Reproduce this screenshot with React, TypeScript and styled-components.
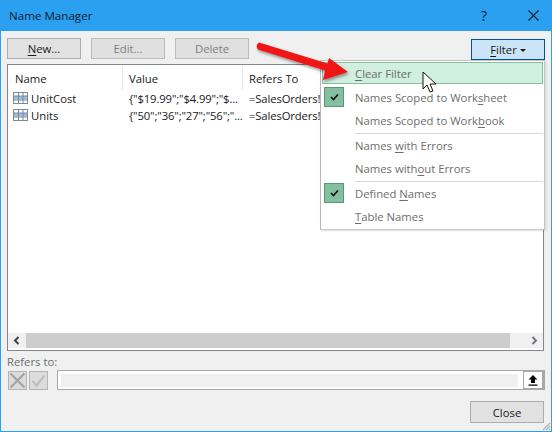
import React from "react";
import styled, { createGlobalStyle } from "styled-components";

const Global = createGlobalStyle`
  html, body { margin: 0; padding: 0; background: #f0f0f0; }
  body { font-family: "Open Sans", "Noto Sans", "Liberation Sans", sans-serif; font-size: 11.3px; color: #1a1a1a; }
  u { text-underline-offset: 2px; text-decoration-thickness: 1px; }
`;

const Win = styled.div`
  position: relative; width: 552px; height: 432px; box-sizing: border-box;
  display: flex; flex-direction: column; background: #f0f0f0;
  border: solid #2b9ff0; border-width: 0 1px 1px 1px; overflow: hidden;
`;
const TitleBar = styled.div`
  height: 31px; flex: none; background: #2b9ff0; display: flex; align-items: center;
  padding: 0 12px 0 8px; color: #10202c; font-size: 11.6px;
`;
const Title = styled.div` flex: 1; `;
const Help = styled.div` width: 12px; margin-right: 38px; font-size: 14px; text-align: center; `;
const Body = styled.div`
  flex: 1; display: flex; flex-direction: column; padding: 7px 6px 8px 6px; min-height: 0;
`;
const Toolbar = styled.div` display: flex; gap: 10px; height: 20px; margin-bottom: 6px; `;
const Btn = styled.div<{ $off?: boolean }>`
  width: 74px; height: 21px; box-sizing: border-box; display: flex; align-items: center; justify-content: center;
  background: ${p => (p.$off ? "#e0e0e0" : "#e1e1e1")};
  border: 1px solid ${p => (p.$off ? "#bcbcbc" : "#adadad")};
  color: ${p => (p.$off ? "#7e7e7e" : "#1a1a1a")};
`;
const FilterBtn = styled(Btn)`
  margin-left: auto; margin-top: 1px; background: #cce4f7; border-color: #005499; gap: 3px;
`;
const Caret = styled.span`
  border: solid transparent; border-width: 3px 3px 0 3px; border-top-color: #1a1a1a; margin-top: 1px;
`;
const List = styled.div`
  height: 287px; flex: none; background: #fff; border: 1px solid #828790; display: flex; flex-direction: column;
  width: 537px; box-sizing: border-box;
`;
const Head = styled.div`
  display: grid; grid-template-columns: 115px 120px 1fr; height: 24px; margin-top: 1px; flex: none;
`;
const HeadCell = styled.div`
  display: flex; align-items: center; padding-left: 6px; border-right: 1px solid #e5e5e5; color: #1a1a1a;
  &:first-child { padding-left: 7px; }
`;
const Rows = styled.div` flex: 1; min-height: 0; padding-top: 0; `;
const Row = styled.div`
  display: grid; grid-template-columns: 115px 120px 1fr; height: 17px; align-items: center; white-space: nowrap;
`;
const NameCell = styled.div` display: flex; align-items: center; gap: 2px; padding-left: 5px; `;
const Cell = styled.div` padding-left: 6px; overflow: hidden; letter-spacing: -0.14px; `;
const Scroll = styled.div`
  height: 15px; margin: 0 0 2px 0; background: #f0f0f0; display: flex; align-items: center; flex: none;
`;
const ScrollEnd = styled.div<{ $w: number }>`
  width: ${p => p.$w}px; flex: none; display: flex; align-items: center; justify-content: center;
`;
const Thumb = styled.div` flex: 1; height: 100%; background: #cdcdcd; `;
const RefLabel = styled.div` margin-top: 3px; height: 15px; line-height: 15px; color: #6d6d6d; `;
const RefRow = styled.div` display: flex; height: 20px; margin-top: 1px; width: 538px; align-items: center; `;
const IconBtn = styled.div`
  width: 19px; height: 19px; box-sizing: border-box; border: 1px solid #b4b4b4; background: #dcdcdc;
  margin-left: 1px; margin-right: 1px; display: flex; align-items: center; justify-content: center;
`;
const RefField = styled.div`
  flex: 1; height: 20px; margin-left: 8px; box-sizing: border-box; border: solid #a8a8a8; border-width: 1px 0 1px 1px;
  background: #fff; padding: 3px 5px 2px 3px; display: flex;
`;
const RefInner = styled.div` flex: 1; background: #f0f0f0; `;
const Upload = styled.div`
  width: 22px; height: 20px; box-sizing: border-box; border: 2px solid #a8a8a8; border-left-width: 1px; border-right-width: 3px;
  background: #fff; display: flex; align-items: center; justify-content: center;
`;
const Footer = styled.div` margin-top: auto; display: flex; justify-content: flex-end; width: 537px; `;
const CloseBtn = styled(Btn)` height: 22px; border-color: #adadad; `;
const Menu = styled.div`
  position: absolute; left: 319px; top: 60px; width: 225px; height: 170px; box-sizing: border-box;
  background: #fff; border: 1px solid #c6c6c6; border-left-color: #b8b8b8; padding: 1px; display: flex; flex-direction: column;
  box-shadow: 1px 1px 2px rgba(0,0,0,.12);
`;
const MenuItem = styled.div<{ $hi?: boolean }>`
  height: ${p => (p.$hi ? 22 : 23)}px; flex: none; box-sizing: border-box; display: flex; align-items: center; position: relative;
  padding-left: 33px; color: #6d6d6d; white-space: nowrap;
  ${p => p.$hi && "background: #d1efdf; border: 1px solid #86bfa0; padding-left: 32px; margin-bottom: 2px;"}
`;
const Sep = styled.div` height: 1px; background: #d7d7d7; margin: 1px 0 0 33px; flex: none; `;
const Check = styled.div`
  position: absolute; left: 2px; top: 1px; width: 20px; height: 20px; box-sizing: border-box;
  background: #86bfa0; border: 1px solid #4f9d74; display: flex; align-items: center; justify-content: center;
`;
const Overlay = styled.svg` position: absolute; left: 0; top: 0; pointer-events: none; `;

const TableIcon = () => (
  <svg width="16" height="13" viewBox="0 0 16 13">
    <rect x=".5" y=".5" width="14" height="11" fill="#fff" stroke="#7a8a99" />
    <rect x="1" y="4" width="13" height="3.5" fill="#9dbde0" />
    <path d="M.5 4h14M.5 8h14M5.5 .5v11M10 .5v11" stroke="#7a8a99" strokeWidth="1" fill="none" />
  </svg>
);
const Tick = () => (
  <svg width="9" height="8" viewBox="0 0 9 8"><path d="M1 4l2.5 2.5L8 1.5" stroke="#111" strokeWidth="1.7" fill="none" /></svg>
);

export default function App() {
  return (
    <Win>
      <Global />
      <TitleBar>
        <Title>Name Manager</Title>
        <Help>?</Help>
        <svg width="11" height="11" viewBox="0 0 11 11"><path d="M.5 .5l10 10M10.5 .5l-10 10" stroke="#10202c" strokeWidth="1.1" /></svg>
      </TitleBar>
      <Body>
        <Toolbar>
          <Btn><span><u>N</u>ew...</span></Btn>
          <Btn $off>Edit...</Btn>
          <Btn $off>Delete</Btn>
          <FilterBtn><span><u>F</u>ilter</span><Caret /></FilterBtn>
        </Toolbar>
        <List>
          <Head>
            <HeadCell>Name</HeadCell>
            <HeadCell>Value</HeadCell>
            <HeadCell>Refers To</HeadCell>
          </Head>
          <Rows>
            <Row>
              <NameCell><TableIcon />UnitCost</NameCell>
              <Cell>{'{"$19.99";"$4.99";"$...'}</Cell>
              <Cell>=SalesOrders!$</Cell>
            </Row>
            <Row>
              <NameCell><TableIcon />Units</NameCell>
              <Cell>{'{"50";"36";"27";"56";"...'}</Cell>
              <Cell>=SalesOrders!$</Cell>
            </Row>
          </Rows>
          <Scroll>
            <ScrollEnd $w={18}>
              <svg width="8" height="9" viewBox="0 0 8 9"><path d="M5.5 1L2 4.5 5.5 8" stroke="#444" strokeWidth="2" fill="none" /></svg>
            </ScrollEnd>
            <Thumb />
            <ScrollEnd $w={33}>
              <svg width="8" height="9" viewBox="0 0 8 9" style={{ marginLeft: 14 }}><path d="M2.5 1L6 4.5 2.5 8" stroke="#777" strokeWidth="2" fill="none" /></svg>
            </ScrollEnd>
          </Scroll>
        </List>
        <RefLabel>Refers to:</RefLabel>
        <RefRow>
          <IconBtn>
            <svg width="17" height="17" viewBox="0 0 17 17"><path d="M1.5 1.5l14 14M15.5 1.5l-14 14" stroke="#a6a6a6" strokeWidth="2.4" /></svg>
          </IconBtn>
          <IconBtn>
            <svg width="15" height="13" viewBox="0 0 15 13"><path d="M1.5 7l4 4.5L13.5 1.5" stroke="#c0c0c0" strokeWidth="2.4" fill="none" /></svg>
          </IconBtn>
          <RefField><RefInner /></RefField>
          <Upload>
            <svg width="10" height="11" viewBox="0 0 10 11"><path d="M5 0L9.5 4.5H7V8H3V4.5H.5zM.5 9.5h9v1.2h-9z" fill="#000" /></svg>
          </Upload>
        </RefRow>
        <Footer><CloseBtn>Close</CloseBtn></Footer>
      </Body>
      <Menu>
        <MenuItem $hi><span><u>C</u>lear Filter</span></MenuItem>
        <MenuItem><Check><Tick /></Check><span>Names Scoped to Work<u>s</u>heet</span></MenuItem>
        <MenuItem><span>Names Scoped to Work<u>b</u>ook</span></MenuItem>
        <Sep />
        <MenuItem><span>Names <u>w</u>ith Errors</span></MenuItem>
        <MenuItem><span>Names with<u>o</u>ut Errors</span></MenuItem>
        <Sep />
        <MenuItem><Check><Tick /></Check><span>Defined <u>N</u>ames</span></MenuItem>
        <MenuItem><span><u>T</u>able Names</span></MenuItem>
      </Menu>
      <Overlay width="552" height="432" viewBox="1 0 552 432">
        <defs>
          <filter id="sh" x="-10%" y="-20%" width="130%" height="150%">
            <feDropShadow dx="1" dy="2" stdDeviation="1.5" floodColor="#000" floodOpacity=".4" />
          </filter>
        </defs>
        <path filter="url(#sh)" d="M259 42.5 Q255 45 258 49.5 L325 70.5 L323 80 L348 72 L329 58 L327.5 63.5 Z" fill="#f01414" />
        <path d="M423 72v17l4-4 3 7 3-1-3-7h6z" fill="#fff" stroke="#111" strokeWidth="1" />
      </Overlay>
      <svg width="10" height="10" viewBox="0 0 10 10" style={{ position: "absolute", right: 0, bottom: 0 }}>
        <path d="M9 2L2 9M9 5L5 9M9 8L8 9" stroke="#b0b0b0" strokeWidth="1.2" />
      </svg>
    </Win>
  );
}
